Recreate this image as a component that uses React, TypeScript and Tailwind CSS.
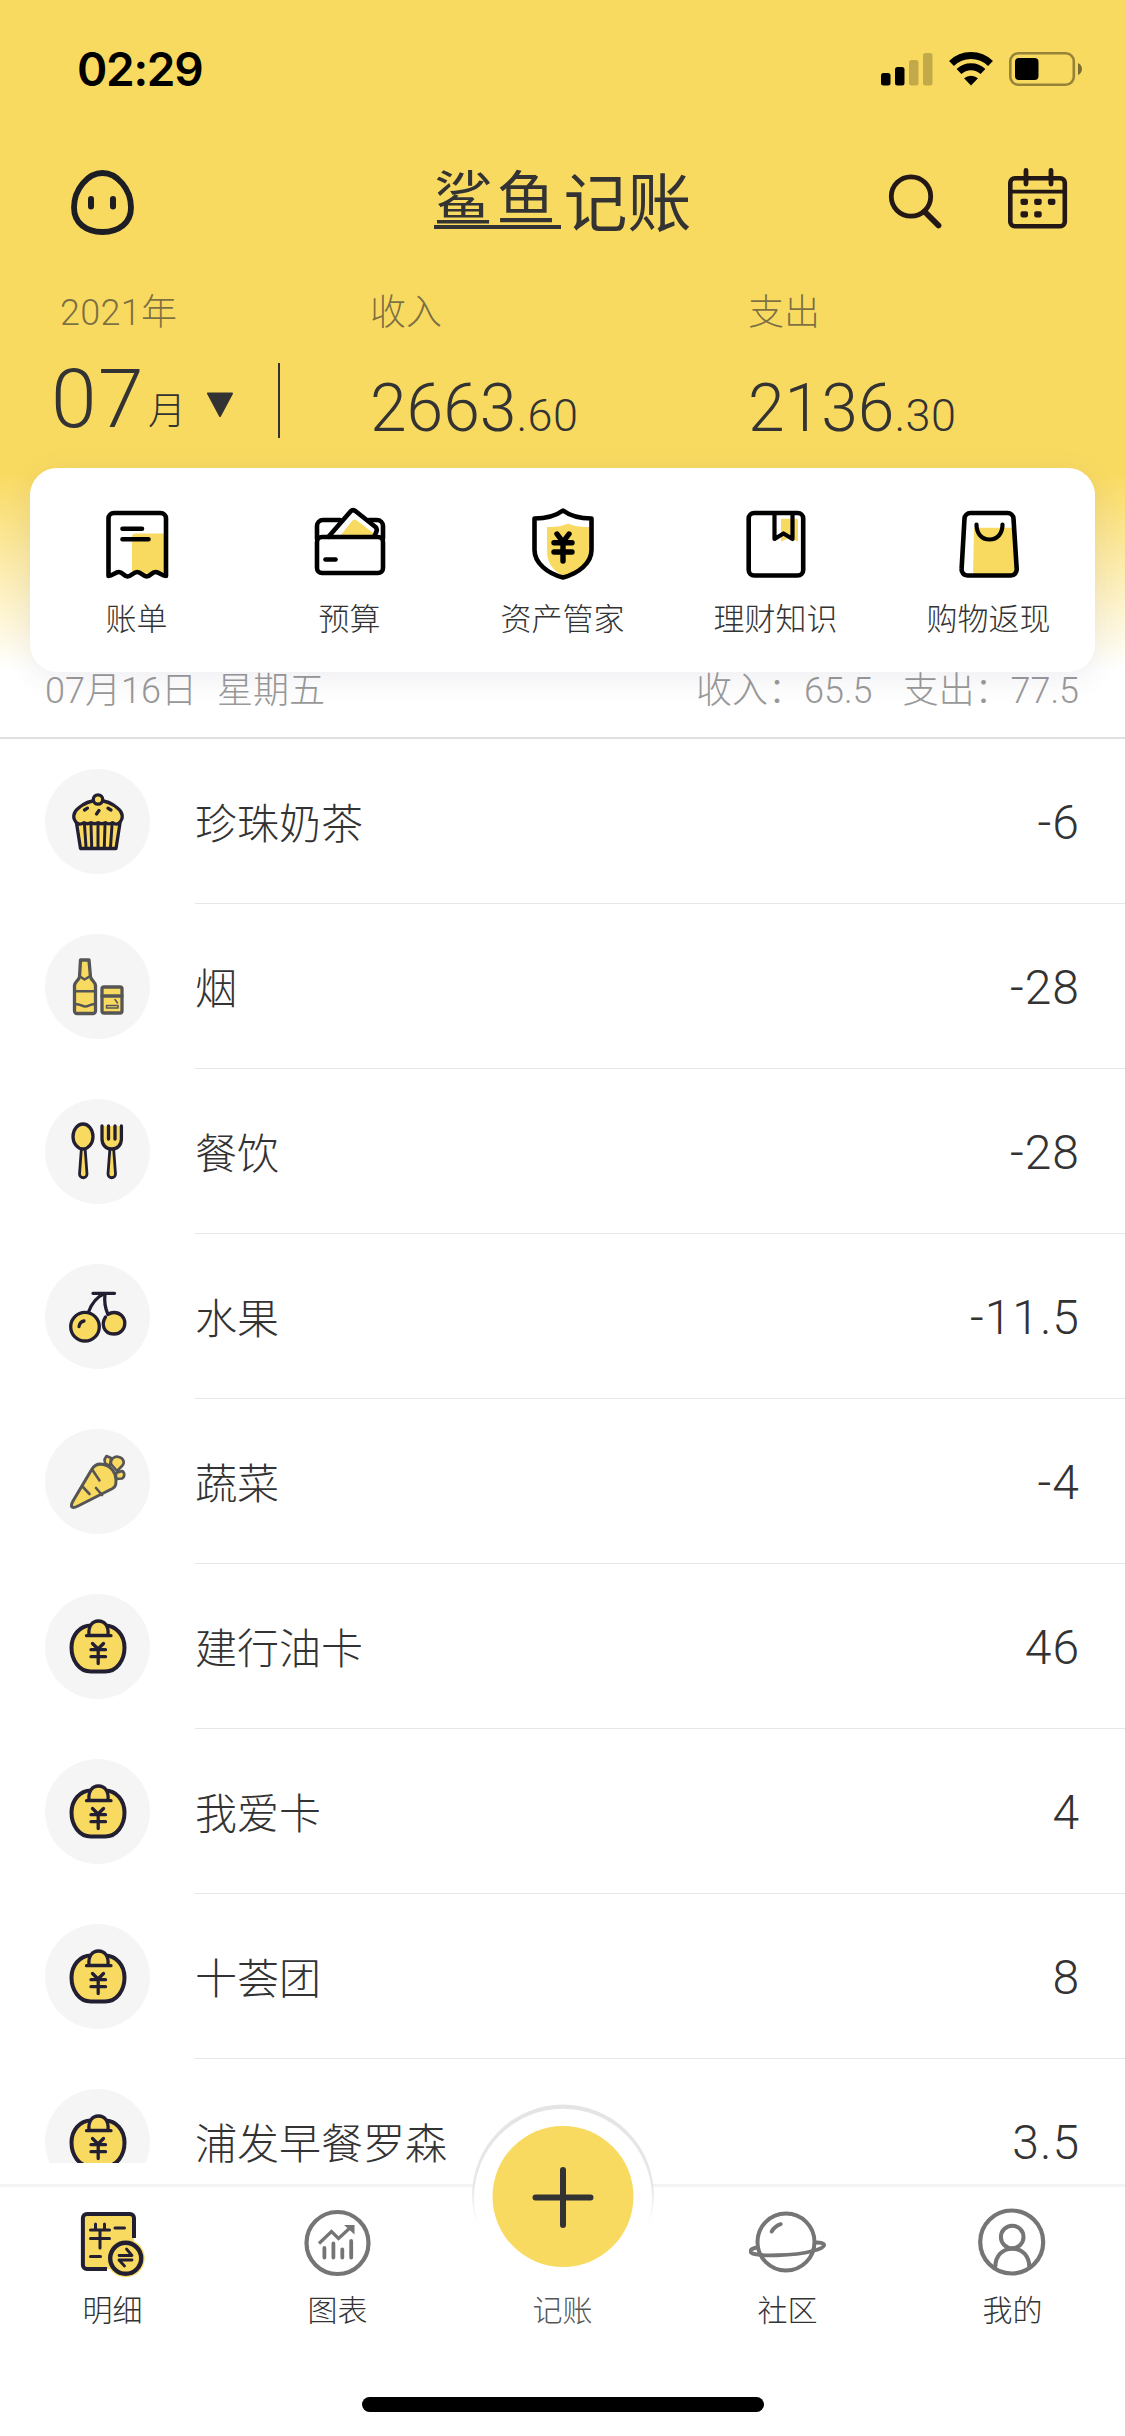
import type { ReactNode } from "react";

const YELLOW = "#f9da61";
const INK = "#231f33";

function StatusBar() {
  return (
    <div className="flex h-[132px] items-center justify-between pt-[6px] pr-[42px] pl-[77px]">
      <span className="font-[Inter] text-[46px] leading-none font-semibold tracking-[-1.3px] text-black">
        02:29
      </span>
      <div className="flex items-center gap-[15px]">
        <svg width="52" height="34" viewBox="0 0 52 34">
          <rect x="0" y="21" width="9.5" height="12.5" rx="2.5" />
          <rect x="14" y="15" width="9.5" height="18.5" rx="2.5" />
          <rect x="28" y="8" width="9.5" height="25.5" rx="2.5" opacity=".22" />
          <rect x="42" y="1" width="9.5" height="32.5" rx="2.5" opacity=".22" />
        </svg>
        <svg width="46" height="34" viewBox="0 0 46 34">
          <path
            d="M3.500 11.500a28 28 0 0 1 39 0M11 19.500a17.500 17.500 0 0 1 24 0"
            fill="none"
            stroke="#000"
            strokeWidth="7"
          />
          <path d="M23 33.500l-7-7.200a10.500 10.500 0 0 1 14 0z" />
        </svg>
        <svg width="74" height="34" viewBox="0 0 74 34">
          <rect x="1.3" y="1.3" width="63.5" height="31.4" rx="8" fill="none" stroke="#000" strokeOpacity=".4" strokeWidth="2.6" />
          <rect x="6" y="6" width="23.5" height="22" rx="4" />
          <path d="M69 11c5.300 2 5.300 10 0 12z" opacity=".5" />
        </svg>
      </div>
    </div>
  );
}

function TitleBar() {
  return (
    <div className="flex h-[138px] items-start justify-between pt-[36px] pr-[57px] pl-[71px]">
      <svg width="64" height="66" viewBox="0 0 64 66" className="mt-[2px]" fill="none" stroke="#1d1d24">
        <path d="M31.500 3C46 3 60 19 60 37.500 60 53 48 62 31.500 62S3 53 3 37.500C3 19 17 3 31.500 3z" strokeWidth="5.800" />
        <path d="M20 29v7.500M42 29v7.500" strokeWidth="6" strokeLinecap="round" />
      </svg>
      <h1 className="ml-[103px] flex h-[62px] items-start font-normal whitespace-nowrap text-[#333] font-['Noto_Sans_CJK_SC',sans-serif]">
        <span className="flex h-[61px] w-[127px] border-b-4 border-[#333] text-[59px] leading-[54px] tracking-[4px]">
          鲨鱼
        </span>
        <span className="ml-[3px] text-[64px] leading-[60px]">记账</span>
      </h1>
      <div className="flex gap-[65px]">
        <svg width="56" height="62" viewBox="0 0 56 62" fill="none" stroke="#231815">
          <circle cx="24" cy="28.5" r="19.7" strokeWidth="4.8" />
          <path d="M37.500 43.500L51.500 57.500" strokeWidth="5.800" strokeLinecap="round" />
        </svg>
        <svg width="60" height="62" viewBox="0 0 60 62" fill="none" stroke="#231815">
          <rect x="2.3" y="10.3" width="54.5" height="48" rx="4.5" strokeWidth="4.6" />
          <path d="M2.500 23.700h54" strokeWidth="3.800" />
          <path d="M18 2.500v13.500M43 2.500v13.500" strokeWidth="4.800" strokeLinecap="round" />
          <g fill="#231815" stroke="none">
            <rect x="12.5" y="30.7" width="7.5" height="6.2" rx="1.8" />
            <rect x="26.2" y="30.7" width="7.5" height="6.2" rx="1.8" />
            <rect x="39.9" y="30.7" width="7.5" height="6.2" rx="1.8" />
            <rect x="12.5" y="43.2" width="7.5" height="6.2" rx="1.8" />
            <rect x="26.2" y="43.2" width="7.5" height="6.2" rx="1.8" />
          </g>
        </svg>
      </div>
    </div>
  );
}

function Amount({ label, whole, cents }: { label: string; whole: string; cents: string }) {
  return (
    <div className="flex flex-col">
      <span className="text-[36px] leading-[44px] text-[#333]/65">{label}</span>
      <p className="mt-[34px] flex items-baseline text-[#333]">
        <span className="text-[66px] leading-[80px]">{whole}</span>
        <span className="text-[45px] leading-[60px] tracking-[0.4px]">.{cents}</span>
      </p>
    </div>
  );
}

function Summary() {
  return (
    <div className="flex h-[198px] pt-[21px]">
      <div className="flex w-[370px] flex-col">
        <span className="pl-[60px] text-[36px] leading-[44px] tracking-[0.3px] text-[#333]/65">2021年</span>
        <div className="flex pt-[19px] pl-[51px] text-[#333]">
          <span className="w-[95px] text-[82px] leading-[90px] tracking-[1.5px]">07</span>
          <span className="w-[38px] pt-[28px] pl-[2px] text-[38px] leading-[58px]">月</span>
          <svg width="28" height="26" viewBox="0 0 28 26" className="mt-[38px] ml-[22px]">
            <path d="M2 1.500h24L14 24z" fill="#333" stroke="#333" strokeWidth="2" strokeLinejoin="round" />
          </svg>
          <span className="mt-[9px] ml-[44px] h-[75px] w-[2px] bg-[#333]" />
        </div>
      </div>
      <div className="w-[378px]">
        <Amount label="收入" whole="2663" cents="60" />
      </div>
      <Amount label="支出" whole="2136" cents="30" />
    </div>
  );
}

function ShortcutIcon({ children }: { children: ReactNode }) {
  return (
    <svg
      width="72"
      height="74"
      viewBox="0 0 72 74"
      fill="none"
      stroke="#000"
      strokeWidth="4.6"
      strokeLinecap="round"
      strokeLinejoin="round"
    >
      {children}
    </svg>
  );
}

const shortcuts = [
  {
    label: "账单",
    icon: (
      <ShortcutIcon>
        <path d="M31 30a3.500 3.500 0 0 1 3.500-3.500H64V67l-9.500-2-9 4-9-4-5.500 2z" fill={YELLOW} stroke="none" />
        <path d="M7.500 69V11.500a5.500 5.500 0 0 1 5.500-5.500h46.500a5.500 5.500 0 0 1 5.500 5.500V69c-4.500 0-6.500-4-10.500-4s-5 4.500-8.800 4.500-5.500-4.500-9.500-4.500-5.800 4.500-9.600 4.500-4.800-4.500-8.700-4.500-6 4-10.400 4z" />
        <path d="M21.500 21.700h19.500M21.500 32.300h26" />
      </ShortcutIcon>
    ),
  },
  {
    label: "预算",
    icon: (
      <ShortcutIcon>
        <path d="M26 29l12-15q2.500-3 5.500 0l17 13v2z" fill={YELLOW} stroke="none" />
        <path d="M3 32V19a6 6 0 0 1 6-6H26M55 13h8a6 6 0 0 1 6 6v13" />
        <path d="M14.500 29.700L36.500 4.500q2.500-2.700 5.500 0L61.500 20q2 2 1 4.500L60.500 29" />
        <rect x="3" y="30" width="66" height="36" rx="5" />
        <path d="M11.500 52.500h10" />
      </ShortcutIcon>
    ),
  },
  {
    label: "资产管家",
    icon: (
      <ShortcutIcon>
        <path d="M20 20c8 0 14-.5 21.500-3.500 7 3.500 14 3.500 22.500 3.500v24c0 12-14 22-26 26-11-5-18-14-18-26z" fill={YELLOW} stroke="none" />
        <path d="M36 3.500C28 9.500 18 11.500 7.500 11.500V43c0 13 13 23.500 28.500 27.500C51.500 66.500 64.500 56 64.500 43V11.500C54 11.500 44 9.500 36 3.500z" />
        <path d="M30 27l6 8 6-8M27 35.700h18M27 45h18M36 36v18" strokeWidth="5.400" />
      </ShortcutIcon>
    ),
  },
  {
    label: "理财知识",
    icon: (
      <ShortcutIcon>
        <path d="M41 11.700h17v23l-8.500-4-8.500 4z" fill={YELLOW} stroke="none" />
        <rect x="8.7" y="6" width="54.5" height="62.5" rx="5.5" />
        <path d="M34.500 6v26l9-5.500 9 5.500V6" strokeWidth="4.200" />
      </ShortcutIcon>
    ),
  },
  {
    label: "购物返现",
    icon: (
      <ShortcutIcon>
        <path d="M21 20.700h40l2 45a3 3 0 0 1-3 3H20z" fill={YELLOW} stroke="none" />
        <path d="M17.500 6h37a6 6 0 0 1 6 5.700L63.700 62a6 6 0 0 1-6 6.500H14.600a6 6 0 0 1-6-6.500l2.900-50.300a6 6 0 0 1 6-5.700z" />
        <path d="M23.500 17.500c0 9 5 15 13 15s13-6 13-15" strokeWidth="4.200" />
      </ShortcutIcon>
    ),
  },
];

function Shortcuts() {
  return (
    <nav className="mx-[30px] grid h-[204px] grid-cols-5 rounded-[27px] bg-white pt-[39px] shadow-[0_6px_30px_rgba(70,70,110,0.09)]">
      {shortcuts.map((item) => (
        <div key={item.label} className="flex flex-col items-center">
          {item.icon}
          <span className="mt-[16px] text-[31px] leading-[46px] text-[#333]">{item.label}</span>
        </div>
      ))}
    </nav>
  );
}

function CategoryIcon({ children, color = INK }: { children: ReactNode; color?: string }) {
  return (
    <svg
      width="105"
      height="105"
      viewBox="0 0 105 105"
      className="shrink-0 rounded-full bg-[#f5f5f5]"
      fill={YELLOW}
      stroke={color}
      strokeWidth="3.3"
      strokeLinecap="round"
      strokeLinejoin="round"
    >
      {children}
    </svg>
  );
}

const cupcake = (
  <CategoryIcon>
    <path d="M31.500 54l4 25.500h35.500l4-25.500z" />
    <path d="M39.500 56l1.500 22M46 56l.7 22M53 56v22M60 56l-.7 22M67 56l-1.500 22" strokeWidth="3" />
    <path d="M32.500 54.500c-6-5-4-11.500.5-15 5.500-5 12-8 20-8s14.500 3 20 8c4.500 3.500 6.500 10 .5 15-2.500 1.500-4.500 0-6-.8-2 1.300-5 1.300-7 0-2.200 1.300-5 1.300-7.300 0-2.200 1.300-5 1.300-7.200 0-2.200 1.300-5 1.300-7 0-1.800 1.200-4.500 2-6.500.8z" />
    <circle cx="53" cy="30.5" r="4.7" />
    <path d="M39.500 41l3-1.800M51.500 45l2.500-3.500M63 39.300l3 1.700" />
  </CategoryIcon>
);

const bottle = (
  <CategoryIcon color="#555">
    <path d="M35.500 26h8.500l1.500 17c1 3.500 4.500 4.500 5 8.500v25.500a2.500 2.500 0 0 1-2.500 2.500H32a2.500 2.500 0 0 1-2.500-2.500V51.500c.5-4 4-5 5-8.500z" />
    <path d="M35 42.500l4.500 3 5-3M30 57.300h20M30 70.500c4-1.500 6 2 10 2s6-3 10-2" strokeWidth="2.500" />
    <rect x="57" y="53" width="20" height="26" rx="2" />
    <path d="M57 62h20" />
    <path d="M61.500 71.500h11.500v2.500H61.500zM70 65.500l2.500 3.500" strokeWidth="1.500" />
  </CategoryIcon>
);

const cutlery = (
  <CategoryIcon>
    <path d="M36.500 48l-2 27c0 5 7.500 5 7.500 0l-2-27z" strokeWidth="2.800" />
    <ellipse cx="38" cy="37.5" rx="10" ry="12.5" />
    <path d="M65 48l-2 27c0 5 7.500 5 7.500 0l-2-27z" strokeWidth="2.800" />
    <path d="M57 27v13c0 6 4 10 9.700 10s9.700-4 9.700-10V27z" stroke="none" />
    <path d="M57 27v13c0 6 4 10 9.700 10s9.700-4 9.700-10V27M63.500 27v13M70 27v13" fill="none" />
  </CategoryIcon>
);

const cherries = (
  <CategoryIcon>
    <path d="M48 29.300h21.500M43.500 48c3-8 8-15 16-18.500M60 30c-1 8 0 14 3 20.500" fill="none" />
    <circle cx="40" cy="62.7" r="14.3" />
    <path d="M60.500 53c-4 6-3 17 8.500 17 6 0 10.800-4.500 10.800-10.800S75 48.500 69 48.500c-2.500 0-4 .5-6 2" />
    <path d="M34 62.500c.5-3 2-5 5-5.500" fill="none" />
  </CategoryIcon>
);

const carrot = (
  <CategoryIcon color="#555">
    <path d="M60 34l-.5-3.500 2-3.500 4.500 2-1 8zM66 35c-1-5 4-8.500 8-7 5 1.500 6 6 3 9l-5 5zM71 44l6-2c3 1.500 3 6 0 7.500l-6 .5z" strokeWidth="2.600" />
    <path d="M27 78c-1.500-2 0-4 1-6L47 40c2.500-4 7-5.500 11.500-4.500C66 37 71 44 71 51c0 4 0 6.500-3.500 8.500L33 77c-2 1-4.500 2-6 1z" strokeWidth="3" />
    <path d="M47.500 41l7 10.500M37 57l7.500 8M51 59l6 7" strokeWidth="2.600" />
  </CategoryIcon>
);

const purse = (
  <CategoryIcon>
    <path d="M46 31.500h14c11 0 19.500 9.500 19.500 22S72 77.500 60 77.500H46c-12 0-19.500-11.500-19.500-24S35 31.500 46 31.500z" strokeWidth="4" />
    <path d="M44 41.500c-1-9 3-14.500 9.500-14.500S64 32.500 63 41.500zM41.500 41.700H66" />
    <path d="M47.500 49.500l5.500 5.500 5.500-5.500M46 55.700h14.500M46 62.700h14.500M53.200 55.500V69.500" fill="none" />
  </CategoryIcon>
);

const records = [
  { name: "珍珠奶茶", value: "-6", icon: cupcake },
  { name: "烟", value: "-28", icon: bottle },
  { name: "餐饮", value: "-28", icon: cutlery },
  { name: "水果", value: "-11.5", icon: cherries },
  { name: "蔬菜", value: "-4", icon: carrot },
  { name: "建行油卡", value: "46", icon: purse },
  { name: "我爱卡", value: "4", icon: purse },
  { name: "十荟团", value: "8", icon: purse },
  { name: "浦发早餐罗森", value: "3.5", icon: purse },
];

function RecordList() {
  return (
    <main className="h-[1445px] overflow-hidden">
      {records.map((record) => (
        <div key={record.name} className="group flex h-[165px] pl-[45px]">
          <div className="flex h-[165px] overflow-hidden pt-[30px] group-last:h-[104px]">{record.icon}</div>
          <div className="ml-[45px] flex flex-1 items-center justify-between border-b border-[#e6e6e6] pr-[45px] text-[#333]">
            <span className="pt-[7px] text-[42px] leading-[46px]">{record.name}</span>
            <span className="pt-[4px] text-[48px] leading-[48px] tracking-[1px]">{record.value}</span>
          </div>
        </div>
      ))}
    </main>
  );
}

function TabIcon({ children, color = "#757575" }: { children?: ReactNode; color?: string }) {
  return (
    <svg
      width="78"
      height="72"
      viewBox="-3 0 78 72"
      fill="none"
      stroke={color}
      strokeWidth="4"
      strokeLinecap="round"
      strokeLinejoin="round"
    >
      {children}
    </svg>
  );
}

const tabs = [
  {
    label: "明细",
    icon: (
      <TabIcon color={INK}>
        <path d="M5.900 11a4 4 0 0 1 4-4h43a4 4 0 0 1 4 4v25L35.500 62H9.900a4 4 0 0 1-4-4z" fill={YELLOW} stroke="none" />
        <path d="M57 31V11a4 4 0 0 0-4-4H9.900a4 4 0 0 0-4 4v47a4 4 0 0 0 4 4H30" strokeLinecap="butt" />
        <circle cx="48.7" cy="51.3" r="19" fill={YELLOW} stroke="none" />
        <circle cx="48.7" cy="51.3" r="15.5" fill={YELLOW} strokeWidth="4.4" />
        <path d="M18.500 17v5M27.500 17v5M13.500 23h19M13.500 31.500h19M23 23v18M38 21h9.500M13.500 49.500h10" strokeWidth="3" />
        <path d="M42 48.500h13l-5.500-6.500M55 53H42l5.500 6" strokeWidth="2.800" />
      </TabIcon>
    ),
  },
  {
    label: "图表",
    icon: (
      <TabIcon>
        <circle cx="35.5" cy="36" r="31" strokeWidth="4.2" />
        <path d="M22.400 41v9.500M31.400 36.500v14M40.300 42.500v8M49.200 34v16.500" strokeWidth="3.800" />
        <path d="M17 36.500l12.500-12 7 7L49 20" strokeWidth="3.200" strokeLinecap="butt" strokeLinejoin="miter" />
        <path d="M42 18h10.500v9.500z" fill="#757575" stroke="none" />
      </TabIcon>
    ),
  },
  { label: "记账", icon: <TabIcon /> },
  {
    label: "社区",
    icon: (
      <TabIcon>
        <circle cx="34" cy="35" r="28.5" />
        <path d="M5 40.500c-6 .8-8.500 4-5 5.800 6 3 41 3 60.500-2.300 8-2 12.500-4.300 11.500-6.500-.8-1.500-4-2-8-2" strokeWidth="3.800" />
        <path d="M19.700 24.500c2-3.500 5-6 9-7.300" />
      </TabIcon>
    ),
  },
  {
    label: "我的",
    icon: (
      <TabIcon>
        <circle cx="34.7" cy="35" r="31.5" strokeWidth="4.2" />
        <circle cx="35.2" cy="30" r="11.3" />
        <path d="M18.300 60c0-11 7-18.300 17-18.300s17 7.300 17 18.300" />
      </TabIcon>
    ),
  },
];

function TabBar() {
  return (
    <footer className="relative mt-auto flex h-[252px] flex-col items-center border-t-[3px] border-[#f4f4f4] bg-white">
      <div className="grid w-full grid-cols-5 pt-[20px]">
        {tabs.map((tab, i) => (
          <div key={tab.label} className="flex flex-col items-center">
            {tab.icon}
            <span className={i === 2 ? "mt-[10px] text-[30px] leading-[44px] text-[#555]" : "mt-[10px] text-[30px] leading-[44px] text-[#333]"}>
              {tab.label}
            </span>
          </div>
        ))}
      </div>
      {/* raised add button, sits over the top border */}
      <svg width="184" height="170" viewBox="0 0 184 170" className="absolute -top-[84px] left-[470.5px]">
        <defs>
          <linearGradient id="ring" x1="0" y1="0" x2="0" y2="1">
            <stop offset="0" stopColor="#e4e4e4" />
            <stop offset=".45" stopColor="#e8e8e8" />
            <stop offset=".66" stopColor="#fff" />
          </linearGradient>
        </defs>
        <circle cx="92" cy="92.5" r="91" fill="url(#ring)" />
        <circle cx="92" cy="94.7" r="88.9" fill="#fff" />
        <circle cx="92" cy="93.5" r="70.5" fill={YELLOW} />
        <path d="M64.500 94.500h55M92 67v55" stroke="#333" strokeWidth="6" strokeLinecap="round" />
      </svg>
      <div className="mt-auto mb-[24px] h-[15px] w-[402px] rounded-full bg-black" />
    </footer>
  );
}

export default function App() {
  return (
    <div className="flex h-[2436px] w-[1125px] flex-col overflow-hidden bg-white font-light font-[Roboto,'Noto_Sans_CJK_SC',sans-serif]">
      <header className="relative z-10 h-[672px] shrink-0 bg-[linear-gradient(to_bottom,#f9da61_0,#f9da61_474px,#ffffff_670px)]">
        <StatusBar />
        <TitleBar />
        <Summary />
        <Shortcuts />
      </header>
      <div className="flex h-[67px] shrink-0 items-start justify-between border-b-2 border-[#e0e0e0] pt-px pr-[46px] pl-[45px] text-[36px] leading-[36px] whitespace-pre text-[#999]">
        <div className="flex gap-[20px]">
          <span>07月16日</span>
          <span>星期五</span>
        </div>
        <div className="flex gap-[30px]">
          <span>收入：65.5</span>
          <span>支出：77.5</span>
        </div>
      </div>
      <RecordList />
      <TabBar />
    </div>
  );
}
